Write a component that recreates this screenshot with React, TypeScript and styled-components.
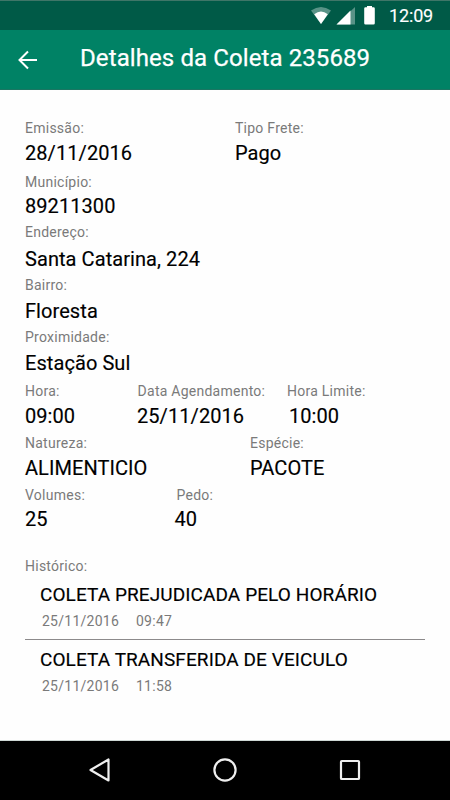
import React from "react";
import styled, { createGlobalStyle } from "styled-components";

const GlobalStyle = createGlobalStyle`
  *, *::before, *::after { box-sizing: border-box; }
  html, body { margin: 0; background: #fff; }
  body { font-family: Roboto, sans-serif; }
`;

const Screen = styled.div`
  width: 450px;
  height: 800px;
  display: flex;
  flex-direction: column;
  background: #fefefe;
  overflow: hidden;
`;

const StatusBar = styled.header`
  height: 30px;
  flex: none;
  display: flex;
  justify-content: flex-end;
  background: #005a47;
  border-top: 1px solid #3f7668;
  color: #fff;
`;

const StatusIcons = styled.svg`
  display: block;
  width: 80px;
  height: 29px;
`;

const Clock = styled.span`
  width: 61px;
  font-size: 18px;
  line-height: 29px;
  letter-spacing: -0.15px;
  -webkit-text-stroke: 0.12px #fff;
  white-space: nowrap;
`;

const AppBar = styled.div`
  height: 60px;
  flex: none;
  display: flex;
  background: #008265;
  border-bottom: 1px solid #1a7662;
  color: #fff;
`;

const BackButton = styled.button`
  width: 80px;
  height: 60px;
  padding: 0 0 0 17px;
  border: 0;
  background: none;
  display: flex;
  align-items: center;

  svg { display: block; }
`;

const Title = styled.h1`
  margin: 0;
  font-size: 24px;
  font-weight: 400;
  line-height: 56px;
  letter-spacing: 0.1px;
  -webkit-text-stroke: 0.25px #fff;
  white-space: nowrap;
`;

const Content = styled.main`
  flex: 1;
  padding: 28px 25px 0;
`;

const Row = styled.section<{ $height: number; $columns: string }>`
  height: ${(p) => p.$height}px;
  display: grid;
  grid-template-columns: ${(p) => p.$columns};
`;

const Label = styled.div<{ $indent?: number }>`
  margin-left: ${(p) => p.$indent ?? 0}px;
  font-size: 14px;
  line-height: 20px;
  letter-spacing: 0.25px;
  color: #7a7a7a;
  white-space: nowrap;
`;

const Value = styled.div<{ $gap: number; $indent?: number }>`
  margin-top: ${(p) => p.$gap}px;
  margin-left: ${(p) => p.$indent ?? 0}px;
  font-size: 20px;
  font-weight: 400;
  line-height: 28px;
  letter-spacing: 0.07px;
  -webkit-text-stroke: 0.15px #000;
  color: #000;
  white-space: nowrap;
`;

const Entry = styled.article<{ $last?: boolean }>`
  height: 64px;
  padding: ${(p) => (p.$last ? 7 : 6)}px 0 0 15px;
  border-bottom: ${(p) => (p.$last ? "0" : "1px solid #8c8a8b")};
`;

const EntryTitle = styled.div`
  font-size: 19px;
  font-weight: 400;
  line-height: 26px;
  letter-spacing: 0.09px;
  -webkit-text-stroke: 0.15px #000;
  color: #000;
  white-space: nowrap;
`;

const EntryMeta = styled.div`
  display: grid;
  grid-template-columns: 94px auto;
  padding: 3px 0 0 2px;
  font-size: 14px;
  line-height: 20px;
  letter-spacing: 0.25px;
  color: #7a7a7a;
`;

const NavBar = styled.nav`
  height: 60px;
  flex: none;
  display: flex;
  justify-content: center;
  gap: 97px;
  padding-top: 15px;
  border-top: 1px solid #cfd8d5;
  background: #000;

  svg { display: block; width: 28px; height: 28px; fill: none; stroke: #efefef; stroke-width: 2.2; }
`;

interface Field {
  label: string;
  value: string;
  indent?: number;
  labelIndent?: number;
}

interface FieldRow {
  height: number;
  gap: number;
  columns: string;
  fields: Field[];
}

const rows: FieldRow[] = [
  {
    height: 54, gap: 1, columns: "210px auto",
    fields: [
      { label: "Emissão:", value: "28/11/2016" },
      { label: "Tipo Frete:", value: "Pago" },
    ],
  },
  { height: 50, gap: 0, columns: "auto", fields: [{ label: "Município:", value: "89211300" }] },
  { height: 53, gap: 3, columns: "auto", fields: [{ label: "Endereço:", value: "Santa Catarina, 224" }] },
  { height: 52, gap: 2, columns: "auto", fields: [{ label: "Bairro:", value: "Floresta" }] },
  { height: 54, gap: 2, columns: "auto", fields: [{ label: "Proximidade:", value: "Estação Sul" }] },
  {
    height: 52, gap: 1, columns: "112px 150px auto",
    fields: [
      { label: "Hora:", value: "09:00" },
      { label: "Data Agendamento:", value: "25/11/2016", labelIndent: 0.6 },
      { label: "Hora Limite:", value: "10:00", indent: 2 },
    ],
  },
  {
    height: 52, gap: 1, columns: "225px auto",
    fields: [
      { label: "Natureza:", value: "ALIMENTICIO" },
      { label: "Espécie:", value: "PACOTE" },
    ],
  },
  {
    height: 71, gap: 0, columns: "151px auto",
    fields: [
      { label: "Volumes:", value: "25" },
      { label: "Pedo:", value: "40", indent: -1.5, labelIndent: 0.5 },
    ],
  },
];

export default function App() {
  return (
    <>
      <GlobalStyle />
      <Screen>
        <StatusBar>
          <StatusIcons viewBox="0 1 80 29" fill="#fff">
            <path d="M2 10.600Q12 3.600 22 10.600L12 24Z" opacity=".35" />
            <path d="M5.200 14.200Q12 9 18.800 14.200L12 24Z" />
            <path d="M46 7V24.500H27.500Z" opacity=".35" />
            <path d="M41.500 10.500V24.500H27.500Z" />
            <path d="M58 6h5v1.300h1.500q1.300 0 1.300 1.300v14.600q0 1.300-1.300 1.300h-8q-1.300 0-1.300-1.300V8.600q0-1.300 1.300-1.300H58Z" />
          </StatusIcons>
          <Clock>12:09</Clock>
        </StatusBar>
        <AppBar>
          <BackButton aria-label="Voltar">
            <svg width="22" height="22" viewBox="0 0 22 22" fill="none" stroke="#fff" strokeWidth="2">
              <path d="M20 11H2.500M11 2.500L2.500 11L11 19.500" />
            </svg>
          </BackButton>
          <Title>Detalhes da Coleta 235689</Title>
        </AppBar>
        <Content>
          {rows.map((row) => (
            <Row key={row.fields[0].label} $height={row.height} $columns={row.columns}>
              {row.fields.map((f) => (
                <div key={f.label}>
                  <Label $indent={f.labelIndent}>{f.label}</Label>
                  <Value $gap={row.gap} $indent={f.indent}>{f.value}</Value>
                </div>
              ))}
            </Row>
          ))}
          <Label>Histórico:</Label>
          <Entry>
            <EntryTitle>COLETA PREJUDICADA PELO HORÁRIO</EntryTitle>
            <EntryMeta><span>25/11/2016</span><span>09:47</span></EntryMeta>
          </Entry>
          <Entry $last>
            <EntryTitle>COLETA TRANSFERIDA DE VEICULO</EntryTitle>
            <EntryMeta><span>25/11/2016</span><span>11:58</span></EntryMeta>
          </Entry>
        </Content>
        <NavBar>
          <svg viewBox="0 0 28 28"><path d="M22.500 3.500V24.500L4.500 14Z" strokeLinejoin="round" /></svg>
          <svg viewBox="0 0 28 28"><circle cx="14" cy="14" r="10.600" /></svg>
          <svg viewBox="0 0 28 28"><rect x="5" y="5" width="18" height="18" rx=".8" /></svg>
        </NavBar>
      </Screen>
    </>
  );
}
